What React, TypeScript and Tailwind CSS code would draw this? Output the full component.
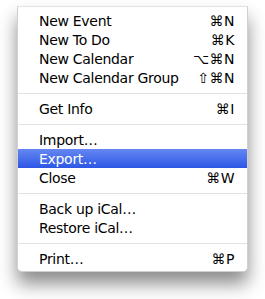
type Item = { label: string; keys?: string; active?: boolean } | "sep";

const items: Item[] = [
  { label: "New Event", keys: "⌘N" },
  { label: "New To Do", keys: "⌘K" },
  { label: "New Calendar", keys: "⌥⌘N" },
  { label: "New Calendar Group", keys: "⇧⌘N" },
  "sep",
  { label: "Get Info", keys: "⌘I" },
  "sep",
  { label: "Import…" },
  { label: "Export…", active: true },
  { label: "Close", keys: "⌘W" },
  "sep",
  { label: "Back up iCal…" },
  { label: "Restore iCal…" },
  "sep",
  { label: "Print…", keys: "⌘P" },
];

export default function App() {
  return (
    <div className="w-[265px] h-[299px] bg-white pt-[6px] pl-[17px] font-['DejaVu_Sans','Verdana',sans-serif]">
      <div className="w-[231px] bg-white border border-[#d0d0d0] border-t-[#e4e4e4] rounded-b-[5px] pt-[4px] pb-[3px] shadow-[0_12px_18px_rgba(0,0,0,0.45)]">
        {items.map((it, i) =>
          it === "sep" ? (
            <div key={i} className="h-[12px] flex items-center">
              <div className="h-px w-full bg-[#e2e2e2]" />
            </div>
          ) : (
            <div
              key={i}
              className={
                "h-[19px] flex items-center justify-between pl-[21px] pr-[12px] text-[14px] tracking-[-0.3px] leading-none " +
                (it.active
                  ? "bg-gradient-to-b from-[#6687f1] to-[#2c55e6] text-white"
                  : "text-black")
              }
            >
              <span>{it.label}</span>
              {it.keys && <span className="tracking-[0.5px]">{it.keys}</span>}
            </div>
          )
        )}
      </div>
    </div>
  );
}
